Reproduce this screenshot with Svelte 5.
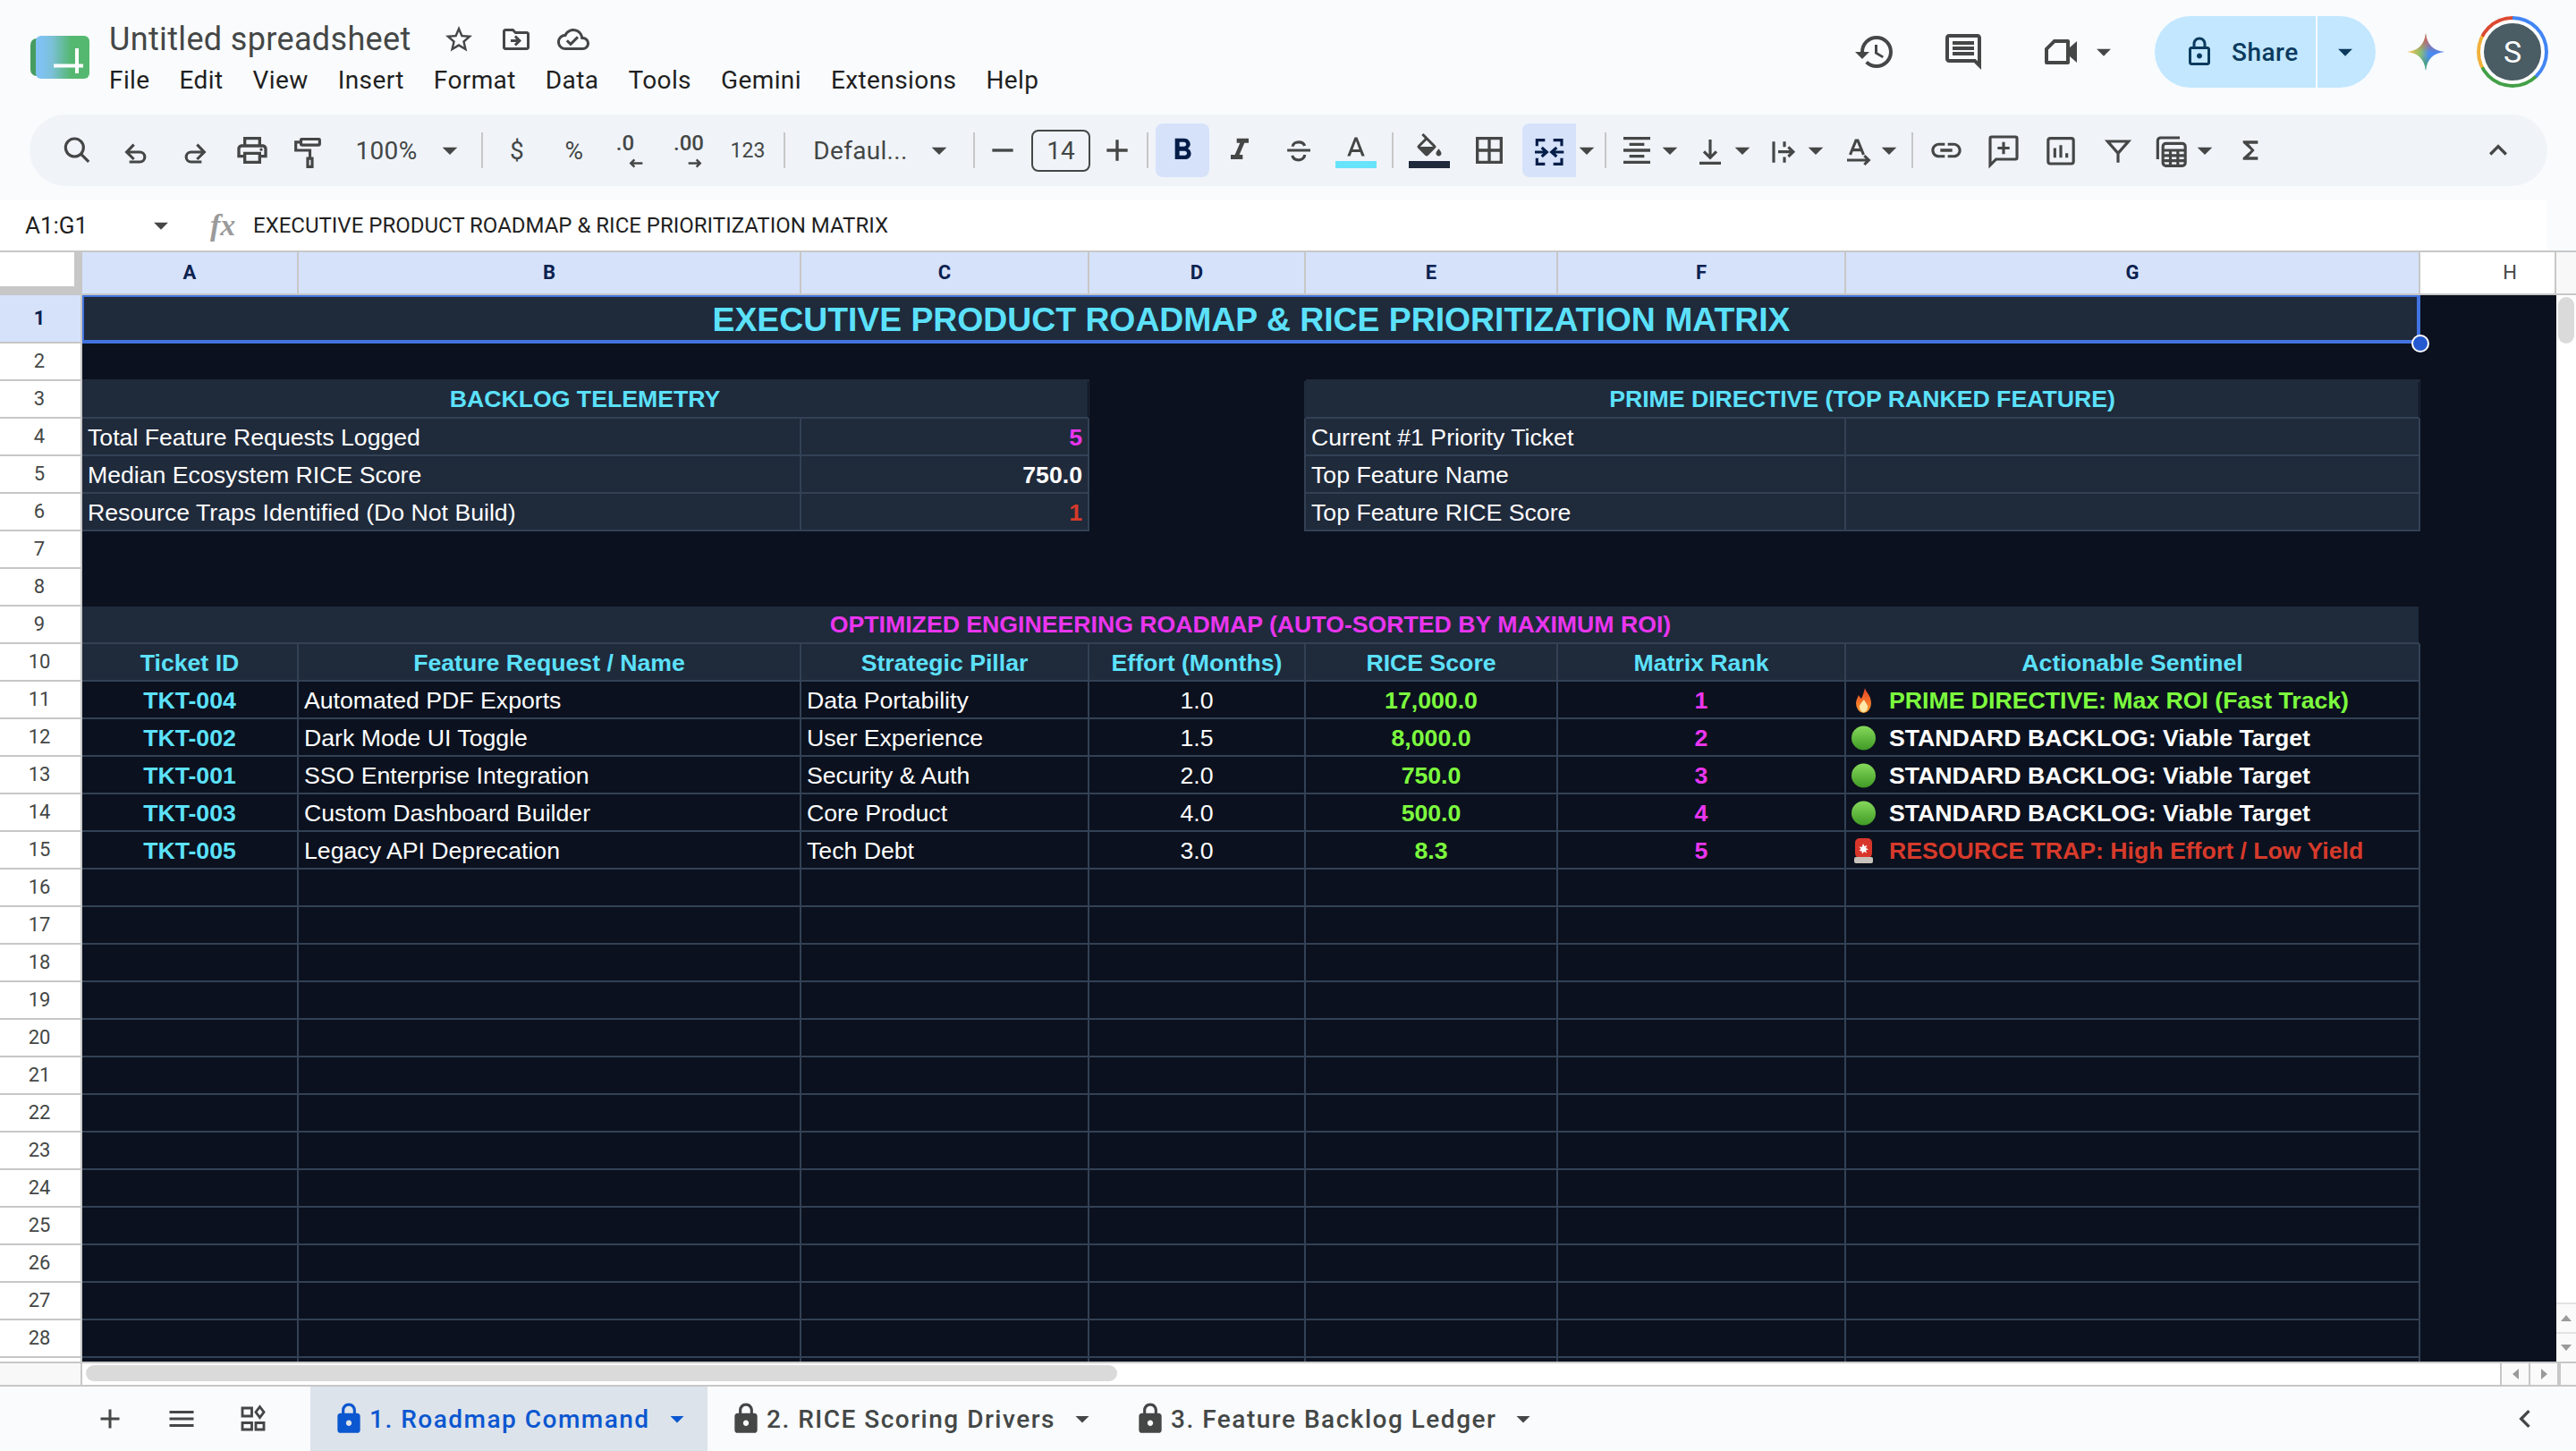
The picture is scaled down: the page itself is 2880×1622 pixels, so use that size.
<script>
  const P = {
    print: 'M19 8h-1V3H6v5H5c-1.66 0-3 1.34-3 3v6h4v4h12v-4h4v-6c0-1.66-1.34-3-3-3zM8 5h8v3H8V5zm8 14H8v-4h8v4zm2-4v-2H6v2H4v-4c0-.55.45-1 1-1h14c.55 0 1 .45 1 1v4h-2z M18 10.500a1 1 0 1 1 0 2 1 1 0 0 1 0-2z',
    bold: 'M15.6 10.79c.97-.67 1.65-1.77 1.65-2.79 0-2.26-1.75-4-4-4H7v14h7.04c2.09 0 3.71-1.7 3.71-3.79 0-1.52-.86-2.82-2.15-3.42zM10 6.5h3c.83 0 1.5.67 1.5 1.5s-.67 1.5-1.5 1.5h-3v-3zm3.5 9H10v-3h3.5c.83 0 1.5.67 1.5 1.5s-.67 1.5-1.5 1.5z',
    italic: 'M10 4v3h2.21l-3.42 8H6v3h8v-3h-2.21l3.42-8H18V4z',
    colorA: 'M11 3L5.5 17h2.25l1.12-3h6.25l1.12 3h2.25L13 3h-2zm-1.38 9L12 5.67 14.38 12H9.62z',
    fill: 'M16.56 8.94L7.62 0 6.21 1.41l2.38 2.38-5.15 5.15c-.59.59-.59 1.54 0 2.12l5.5 5.5c.29.29.68.44 1.06.44s.77-.15 1.06-.44l5.5-5.5c.59-.58.59-1.53 0-2.12zM5.21 10L10 5.21 14.79 10H5.21zM19 11.5s-2 2.17-2 3.5c0 1.1.9 2 2 2s2-.9 2-2c0-1.33-2-3.5-2-3.5z',
    borders: 'M3 3v18h18V3H3zm8 16H5v-6h6v6zm0-8H5V5h6v6zm8 8h-6v-6h6v6zm0-8h-6V5h6v6z',
    halign: 'M7 15v2h10v-2H7zm-4 6h18v-2H3v2zm0-8h18v-2H3v2zm4-6v2h10V7H7zM3 3v2h18V3H3z',
    link: 'M3.9 12c0-1.71 1.39-3.1 3.1-3.1h4V7H7c-2.76 0-5 2.24-5 5s2.24 5 5 5h4v-1.9H7c-1.71 0-3.1-1.39-3.1-3.1zM8 13h8v-2H8v2zm9-6h-4v1.9h4c1.71 0 3.1 1.39 3.1 3.1s-1.39 3.1-3.1 3.1h-4V17h4c2.76 0 5-2.24 5-5s-2.24-5-5-5z',
    sigma: 'M17 5.500H7v1.500l5.500 5-5.500 5v1.500h10v-2.200h-6.200l4-4.300-4-4.300h6.200z',
    up: 'M7.41 15.41L12 10.83l4.59 4.58L18 14l-6-6-6 6z',
    caret: 'M7 10l5 5 5-5z',
    minus: 'M5 11h14v2H5z',
    plus: 'M19 13h-6v6h-2v-6H5v-2h6V5h2v6h6v2z',
    lock: 'M18 8h-1V6c0-2.76-2.24-5-5-5S7 3.24 7 6v2H6c-1.1 0-2 .9-2 2v10c0 1.1.9 2 2 2h12c1.1 0 2-.9 2-2V10c0-1.1-.9-2-2-2zM9 6c0-1.66 1.34-3 3-3s3 1.34 3 3v2H9V6zm3 11c-1.1 0-2-.9-2-2s.9-2 2-2 2 .9 2 2-.9 2-2 2z',
    lockO: 'M18 8h-1V6c0-2.76-2.24-5-5-5S7 3.24 7 6v2H6c-1.1 0-2 .9-2 2v10c0 1.1.9 2 2 2h12c1.1 0 2-.9 2-2V10c0-1.1-.9-2-2-2zM9 6c0-1.66 1.34-3 3-3s3 1.34 3 3v2H9V6zm9 14H6V10h12v10zm-6-3c1.1 0 2-.9 2-2s-.9-2-2-2-2 .9-2 2 .9 2 2 2z',
    history: 'M13 3a9 9 0 0 0-9 9H1l3.89 3.89.07.14L9 12H6c0-3.87 3.13-7 7-7s7 3.13 7 7-3.13 7-7 7c-1.93 0-3.68-.79-4.94-2.06l-1.42 1.42A8.954 8.954 0 0 0 13 21a9 9 0 0 0 0-18zm-1 5v5l4.28 2.54.72-1.21-3.5-2.08V8H12z',
    comments: 'M21.99 4c0-1.1-.89-2-1.99-2H4c-1.1 0-2 .9-2 2v12c0 1.1.9 2 2 2h14l4 4-.01-18zM20 4v13.17L18.83 16H4V4h16zM6 12h12v2H6zm0-3h12v2H6zm0-3h12v2H6z',
    video: 'M8 5h8a1 1 0 0 1 1 1v3.500l4-3.500v12l-4-3.500V18a1 1 0 0 1-1 1H4a1 1 0 0 1-1-1V10zm.8 2L5 10.800V17h10V7z',
    star: 'M22 9.24l-7.19-.62L12 2 9.19 8.63 2 9.24l5.46 4.73L5.82 21 12 17.27 18.18 21l-1.63-7.03L22 9.24zM12 15.4l-3.76 2.27 1-4.28-3.32-2.88 4.38-.38L12 6.1l1.71 4.04 4.38.38-3.32 2.88 1 4.28L12 15.4z',
    move: 'M20 6h-8l-2-2H4c-1.1 0-1.99.9-1.99 2L2 18c0 1.1.9 2 2 2h16c1.1 0 2-.9 2-2V8c0-1.1-.9-2-2-2zm0 12H4V6h5.17l2 2H20v10zm-8.01-9l-1.41 1.41L12.16 12H8v2h4.16l-1.59 1.59L11.99 17 16 13.01 11.99 9z',
    cloud: 'M19.35 10.04C18.67 6.59 15.64 4 12 4 9.11 4 6.6 5.64 5.35 8.04 2.34 8.36 0 10.91 0 14c0 3.31 2.69 6 6 6h13c2.76 0 5-2.24 5-5 0-2.64-2.05-4.78-4.65-4.96zM19 18H6c-2.21 0-4-1.79-4-4 0-2.05 1.53-3.76 3.56-3.97l1.07-.11.5-.95C8.08 7.14 9.94 6 12 6c2.62 0 4.88 1.86 5.39 4.43l.3 1.5 1.53.11c1.56.1 2.78 1.41 2.78 2.96 0 1.65-1.35 3-3 3zm-9-3.82l-2.09-2.09L6.5 13.5 10 17l6.01-6.01-1.41-1.41z',
    menu: 'M3 18h18v-2H3zm0-5h18v-2H3zm0-7v2h18V6z',
    left: 'M15.41 7.41L14 6l-6 6 6 6 1.41-1.41L10.83 12z'
  };
  const S = {
    search: 'M17 10.200a6 6 0 1 1-12 0a6 6 0 1 1 12 0zM15.300 14.500L20.500 19.700',
    undo: 'M10 8.200L5.200 13.200L10 18M5.200 13.200H14a3.300 3.300 0 0 1 0 6.600H7',
    redo: 'M14 8.200L18.800 13.200L14 18M18.800 13.200H10a3.300 3.300 0 0 0 0 6.600H17',
    paint: 'M8 4.500h11.500a.5.5 0 0 1 .5.5v3a.5.5 0 0 1-.5.5H8a.5.5 0 0 1-.5-.5V5a.5.5 0 0 1 .5-.5zM7.500 6.500H4v5.500h9.500v5M12 17.500h3v5.500h-3z',
    strike: 'M8 9.500c0-1.900 2-3 4-3s3.500 1 4 2.500M4.300 12h15.500M16 15c0 2-1.800 3.500-4 3.500s-3.800-1-4.300-3',
    merge: 'M9.200 5.200H3.800V9.200M3.800 17.200V21.200H9.200M14.800 5.200H20.400V9.200M20.400 17.200V21.200H14.800M2.400 13.200H10M7 10.200l3.400 3-3.400 3M21.800 13.200H14M17 10.200l-3.400 3 3.400 3',
    valign: 'M12 4.800V17M7.800 12.800L12 17l4.200-4.200M4.800 20.600H19.200',
    wrap: 'M5.400 6.200v14M12.600 6.200v3.500M12.600 16.500v3.700M8.400 13H18.500M15.200 9.800L18.500 13l-3.300 3.200',
    rotate: 'M7.500 15L11.400 5.400h1.200L16.500 15M9 11.800h6M5.400 18.600H20M17 15.600l3 3-3 3',
    comment: 'M4 3h16a1 1 0 0 1 1 1v13a1 1 0 0 1-1 1H7l-4 4V4a1 1 0 0 1 1-1zM12 6.500v8M8 10.500h8',
    chart: 'M5 4h14a1.500 1.500 0 0 1 1.500 1.500v14a1.500 1.500 0 0 1-1.500 1.500H5a1.500 1.500 0 0 1-1.500-1.500v-14A1.500 1.500 0 0 1 5 4zM8 17v-6.500M12 17V8.500M16 17v-3',
    filter: 'M5 6h14l-7 8zM12 14v6.200',
    table: 'M16.800 3.600H4a2 2 0 0 0-2 2V18M7.500 7.400h11a2 2 0 0 1 2 2v11a2 2 0 0 1-2 2h-11a2 2 0 0 1-2-2v-11a2 2 0 0 1 2-2zM5.500 12h15M5.500 15.500h15M5.500 19h15M10.500 12v10.500M15.500 12v10.500',
    sheets: 'M4 4h7v6H4zM4 15h7v5H4zM14 15h6v5h-6zM17 3l3 4-3 4-3-4z'
  };

  const tools = [
    ['s', 85, 56, 'search'], ['s', 153, 56, 'undo'], ['s', 217, 56, 'redo'], ['i', 282, 56, 'print'], ['s', 344, 56, 'paint'],
    ['t', 432, 76, '100%'], ['c', 503, 24], ['sep', 539, 2],
    ['t', 578, 40, '$'], ['t', 642, 40, '%'], ['dec', 699, 44, '.0', 'l'], ['dec', 770, 56, '.00', 'r'], ['ts', 836, 48, '123'], ['sep', 877, 2],
    ['t', 962, 108, 'Defaul...'], ['c', 1050, 24], ['sep', 1089, 2],
    ['i', 1121, 40, 'minus'], ['box', 1186, 66, '14'], ['i', 1249, 40, 'plus'], ['sep', 1283, 2],
    ['on', 1322, 60, 'bold'], ['i', 1386, 44, 'italic'], ['s', 1452, 44, 'strike'], ['bar', 1516, 46, 'colorA', 'cyan'], ['sep', 1557, 2],
    ['bar', 1598, 46, 'fill', 'navy'], ['i', 1665, 44, 'borders'], ['son', 1732, 60, 'merge'], ['c', 1774, 24], ['sep', 1795, 2],
    ['i', 1830, 44, 'halign'], ['c', 1867, 24], ['s', 1912, 44, 'valign'], ['c', 1948, 24], ['s', 1994, 44, 'wrap'], ['c', 2030, 24], ['s', 2076, 44, 'rotate'], ['c', 2112, 24], ['sep', 2138, 2],
    ['i', 2176, 44, 'link'], ['s', 2240, 44, 'comment'], ['s', 2304, 44, 'chart'], ['s', 2368, 44, 'filter'], ['s', 2429, 44, 'table'], ['c', 2465, 24], ['i', 2516, 44, 'sigma'], ['i', 2793, 44, 'up']
  ];
  let edge = 33;
  const toolbar = tools.map(([kind, cx, w, a, b]) => {
    const gap = cx - w / 2 - edge;
    edge = cx + w / 2;
    return { kind, w, gap, a, b };
  });

  const menu = ['File', 'Edit', 'View', 'Insert', 'Format', 'Data', 'Tools', 'Gemini', 'Extensions', 'Help'];
  const letters = ['A', 'B', 'C', 'D', 'E', 'F', 'G'];
  const data = [
    ['TKT-004', 'Automated PDF Exports', 'Data Portability', '1.0', '17,000.0', '1', 'fire', 'PRIME DIRECTIVE: Max ROI (Fast Track)', 'lime'],
    ['TKT-002', 'Dark Mode UI Toggle', 'User Experience', '1.5', '8,000.0', '2', 'dot', 'STANDARD BACKLOG: Viable Target', 'white'],
    ['TKT-001', 'SSO Enterprise Integration', 'Security & Auth', '2.0', '750.0', '3', 'dot', 'STANDARD BACKLOG: Viable Target', 'white'],
    ['TKT-003', 'Custom Dashboard Builder', 'Core Product', '4.0', '500.0', '4', 'dot', 'STANDARD BACKLOG: Viable Target', 'white'],
    ['TKT-005', 'Legacy API Deprecation', 'Tech Debt', '3.0', '8.3', '5', 'siren', 'RESOURCE TRAP: High Effort / Low Yield', 'red']
  ];
  const heads = ['Ticket ID', 'Feature Request / Name', 'Strategic Pillar', 'Effort (Months)', 'RICE Score', 'Matrix Rank', 'Actionable Sentinel'];
  const leftP = [['Total Feature Requests Logged', '5', 'mag'], ['Median Ecosystem RICE Score', '750.0', 'white'], ['Resource Traps Identified (Do Not Build)', '1', 'red']];
  const rightP = ['Current #1 Priority Ticket', 'Top Feature Name', 'Top Feature RICE Score'];
  const emptyRows = Array.from({ length: 14 }, (_, i) => i + 16);
  const tabs = [['1. Roadmap Command', true], ['2. RICE Scoring Drivers', false], ['3. Feature Backlog Ledger', false]];
</script>

{#snippet ic(name, size = 40, cls = '')}
  <svg class={cls} width={size} height={size} viewBox="0 0 24 24"><path d={P[name]} fill="currentColor" /></svg>
{/snippet}
{#snippet st(name, size = 40)}
  <svg width={size} height={size} viewBox="0 0 24 24"><path d={S[name]} fill="none" stroke="currentColor" stroke-width="1.900" /></svg>
{/snippet}
{#snippet rh(n, label = n)}
  <div class="rh" class:rh-on={n === 1}>{label}</div>
{/snippet}

<div class="app">
  <header class="top">
    <svg class="logo" width="66" height="48" viewBox="0 0 66 48">
      <defs><linearGradient id="lg" x1="0" x2="1" y1="0" y2="0"><stop offset="0.1" stop-color="#7fc2f2" /><stop offset="0.3" stop-color="#7cc0d8" /><stop offset="0.65" stop-color="#55b872" /><stop offset="1" stop-color="#55b870" /></linearGradient></defs>
      <rect x="0" y="3" width="24" height="42" rx="7" fill="#479c62" />
      <rect x="6" y="0" width="60" height="48" rx="6" fill="url(#lg)" />
      <path d="M26 33.500h33M52 14v28" stroke="#fff" stroke-width="4" fill="none" />
    </svg>
    <div class="doc">
      <div class="doc-title">
        <span class="name">Untitled spreadsheet</span>
        <span class="doc-icons">
          {@render ic('star', 36)}
          {@render ic('move', 36)}
          {@render ic('cloud', 36)}
        </span>
      </div>
      <nav class="menu">
        {#each menu as m}<span>{m}</span>{/each}
      </nav>
    </div>
    <div class="actions">
      {@render ic('history', 48)}
      <span class="g51">{@render ic('comments', 48)}</span>
      <span class="vid">{@render ic('video', 48)}{@render ic('caret', 38, 'car')}</span>
      <div class="share">
        <div class="share-main">{@render ic('lockO', 36)}<span>Share</span></div>
        <div class="share-drop">{@render ic('caret', 38)}</div>
      </div>
      <svg class="gem" width="42" height="42" viewBox="0 0 24 24">
        <defs>
          <linearGradient id="gm" x1="0" x2="1" y1="0.35" y2="0.5"><stop offset="0.08" stop-color="#f1c04a" /><stop offset="0.38" stop-color="#8cbf72" /><stop offset="0.6" stop-color="#4a8cf0" /><stop offset="1" stop-color="#4285f4" /></linearGradient>
          <linearGradient id="gr" x1="0.45" x2="0.4" y1="0" y2="0.5"><stop offset="0.1" stop-color="#d9534f" /><stop offset="1" stop-color="#d9534f" stop-opacity="0" /></linearGradient>
          <linearGradient id="gg" x1="0.5" x2="0.5" y1="1" y2="0.6"><stop offset="0.1" stop-color="#3fa653" /><stop offset="1" stop-color="#3fa653" stop-opacity="0" /></linearGradient>
        </defs>
        <path d="M12 0C12.500 7 17 11.500 24 12C17 12.500 12.500 17 12 24C11.500 17 7 12.500 0 12C7 11.500 11.500 7 12 0Z" fill="url(#gm)" />
        <path d="M12 0C12.500 7 17 11.500 24 12C17 12.500 12.500 17 12 24C11.500 17 7 12.500 0 12C7 11.500 11.500 7 12 0Z" fill="url(#gr)" />
        <path d="M12 0C12.500 7 17 11.500 24 12C17 12.500 12.500 17 12 24C11.500 17 7 12.500 0 12C7 11.500 11.500 7 12 0Z" fill="url(#gg)" />
      </svg>
      <div class="ava"><div class="ava-in">S</div></div>
    </div>
  </header>

  <div class="toolbar">
    {#each toolbar as t}
      <div class="tb" class:on={t.kind === 'on'} class:son={t.kind === 'son'} class:sep={t.kind === 'sep'} style="width:{t.w}px;margin-left:{t.gap}px">
        {#if t.kind === 'i' || t.kind === 'on'}{@render ic(t.a)}
        {:else if t.kind === 's' || t.kind === 'son'}{@render st(t.a)}
        {:else if t.kind === 't'}<span class="tt">{t.a}</span>
        {:else if t.kind === 'ts'}<span class="tt small">{t.a}</span>
        {:else if t.kind === 'c'}{@render ic('caret', 40)}
        {:else if t.kind === 'box'}<span class="fs">{t.a}</span>
        {:else if t.kind === 'dec'}
          <span class="dec"><span>{t.a}</span>
            <svg class={t.b === 'l' ? 'dl' : 'dr'} width="18" height="13" viewBox="0 0 22 14"><path d={t.b === 'l' ? 'M20 7H4M9 2L4 7l5 5' : 'M2 7h16M13 2l5 5-5 5'} fill="none" stroke="currentColor" stroke-width="3" /></svg>
          </span>
        {:else if t.kind === 'bar'}
          <span class="barred">{@render ic(t.a, 36)}<i class={t.b}></i></span>
        {/if}
      </div>
    {/each}
  </div>

  <div class="fbar">
    <div class="nbox"><span>A1:G1</span>{@render ic('caret', 38)}</div>
    <span class="fx">fx</span>
    <span class="ftext">EXECUTIVE PRODUCT ROADMAP &amp; RICE PRIORITIZATION MATRIX</span>
  </div>

  <div class="sheetwrap">
    <div class="sheet">
      <div class="corner"></div>
      {#each letters as l}<div class="ch ch-on">{l}</div>{/each}
      <div class="ch ch-h">H</div>

      {@render rh(1)}
      <div class="c s7 band title">
        <span>EXECUTIVE PRODUCT ROADMAP &amp; RICE PRIORITIZATION MATRIX</span>
        <div class="sel"><i class="handle"></i></div>
      </div>
      <div class="c blank"></div>

      {@render rh(2)}
      <div class="c s8 blank"></div>

      {@render rh(3)}
      <div class="c s3 band merged ext center bold cyan">BACKLOG TELEMETRY</div>
      <div class="c blank"></div>
      <div class="c s3 band merged ext extl center bold cyan">PRIME DIRECTIVE (TOP RANKED FEATURE)</div>
      <div class="c blank"></div>

      {#each leftP as row, i}
        {@render rh(4 + i)}
        <div class="c s2 band white">{row[0]}</div>
        <div class="c band bold right {row[2]}">{row[1]}</div>
        <div class="c blank"></div>
        <div class="c s2 band edge white">{rightP[i]}</div>
        <div class="c band"></div>
        <div class="c blank"></div>
      {/each}

      {@render rh(7)}
      <div class="c s8 blank"></div>
      {@render rh(8)}
      <div class="c s8 blank"></div>

      {@render rh(9)}
      <div class="c s7 band merged center bold mag">OPTIMIZED ENGINEERING ROADMAP (AUTO-SORTED BY MAXIMUM ROI)</div>
      <div class="c blank"></div>

      {@render rh(10)}
      {#each heads as h}<div class="c band center bold cyan">{h}</div>{/each}
      <div class="c blank"></div>

      {#each data as r, i}
        {@render rh(11 + i)}
        <div class="c center bold cyan">{r[0]}</div>
        <div class="c white">{r[1]}</div>
        <div class="c white">{r[2]}</div>
        <div class="c center white">{r[3]}</div>
        <div class="c center bold lime">{r[4]}</div>
        <div class="c center bold mag">{r[5]}</div>
        <div class="c bold sent {r[8]}">
          {#if r[6] === 'fire'}
            <svg width="27" height="28" viewBox="0 0 27 28">
              <defs><linearGradient id="fi" x1="0" x2="0" y1="0" y2="1"><stop offset="0" stop-color="#e8452a" /><stop offset="0.6" stop-color="#f3762a" /><stop offset="1" stop-color="#f9a63a" /></linearGradient></defs>
              <path d="M15 0c1 5 7 8 7 17a8.500 11 0 0 1-17 0c0-4 2-6 3-9 1 2 2 3 3 4 2-4 3-8 4-12z" fill="url(#fi)" />
              <path d="M14 13c1 3 4 5 4 8a4.500 6 0 0 1-9 0c0-3 3-5 5-8z" fill="#fde9a8" />
            </svg>
          {:else if r[6] === 'dot'}
            <svg width="27" height="28" viewBox="0 0 27 28">
              <defs><linearGradient id="do{i}" x1="0" x2="0" y1="0" y2="1"><stop offset="0" stop-color="#86d95c" /><stop offset="1" stop-color="#3f9a24" /></linearGradient></defs>
              <circle cx="13.500" cy="14" r="13.500" fill="url(#do{i})" />
            </svg>
          {:else}
            <svg width="27" height="28" viewBox="0 0 27 28">
              <rect x="4" y="0" width="19" height="22" rx="5" fill="#d9362b" />
              <rect x="3" y="21" width="21" height="7" rx="2" fill="#c9c3bd" />
              <path d="M13 6l1.500 3 3-1-1.500 3 3 1.500-3 1 1 3-3-1.500-2 2.500-.5-3-3-.5 2-2-2-2.500 3 .5z" fill="#fff" />
            </svg>
          {/if}
          <span>{r[7]}</span>
        </div>
        <div class="c blank"></div>
      {/each}

      {#each emptyRows as n}
        {@render rh(n, n < 29 ? n : '')}
        {#each letters as l}<div class="c"></div>{/each}
        <div class="c blank"></div>
      {/each}
    </div>
    <aside class="vsb">
      <div class="vsb-top"></div>
      <div class="vsb-track"><div class="vsb-thumb"></div></div>
      <div class="vsb-btn"><i class="tri up"></i></div>
      <div class="vsb-btn"><i class="tri down"></i></div>
    </aside>
  </div>

  <div class="hsb">
    <div class="hsb-left"></div>
    <div class="hsb-track"><div class="hsb-thumb"></div></div>
    <div class="hsb-btn"><i class="tri lf"></i></div>
    <div class="hsb-btn"><i class="tri rt"></i></div>
    <div class="hsb-end"></div>
  </div>

  <footer class="tabs">
    <div class="tabtools">
      {@render ic('plus', 36)}
      {@render ic('menu', 36)}
      {@render st('sheets', 36)}
    </div>
    {#each tabs as t}
      <div class="tab" class:active={t[1]}>
        {@render ic('lock', 38)}
        <span>{t[0]}</span>
        {@render ic('caret', 36)}
      </div>
    {/each}
    <div class="tabend">{@render ic('left', 40)}</div>
  </footer>
</div>

<style>
  :global(body) { margin: 0; background: #f9fbfd; }
  .app { width: 2880px; height: 1622px; display: flex; flex-direction: column; overflow: hidden; background: #f9fbfd; font-family: Roboto, "Noto Sans", sans-serif; color: #444746; }
  svg { display: block; flex: none; overflow: visible; }

  .top { height: 128px; flex: none; display: flex; align-items: flex-start; padding-left: 34px; padding-right: 31px; box-sizing: border-box; }
  .logo { margin-top: 40px; }
  .doc { margin-left: 22px; padding-top: 22px; }
  .doc-title { display: flex; align-items: center; height: 44px; }
  .name { font-size: 36px; line-height: 44px; color: #444746; width: 335px; white-space: nowrap; letter-spacing: 0.35px; }
  .doc-icons { display: flex; gap: 28px; margin-left: 38px; }
  .menu { display: flex; gap: 33px; margin-top: 6px; font-size: 28px; line-height: 36px; color: #1f1f1f; letter-spacing: 0.4px; }
  .actions { margin-left: auto; display: flex; align-items: center; height: 80px; margin-top: 18px; }
  .g51 { margin-left: 51px; display: flex; align-items: center; }
  .vid { margin-left: 61px; display: flex; align-items: center; }
  .actions :global(.car) { margin-left: 5px; }
  .share { margin-left: 38px; width: 247px; height: 80px; display: flex; border-radius: 40px; overflow: hidden; color: #0b3a5e; }
  .share-main { width: 180px; background: #c2e7ff; display: flex; align-items: center; padding-left: 32px; box-sizing: border-box; gap: 18px; font-size: 28px; font-weight: 500; letter-spacing: 0.5px; }
  .share-drop { flex: 1; margin-left: 2px; background: #c2e7ff; display: flex; align-items: center; justify-content: center; padding-right: 4px; }
  .gem { margin-left: 35px; }
  .ava { margin-left: 36px; width: 80px; height: 80px; border-radius: 50%; background: conic-gradient(#4285f4 44deg, #4285f4 137deg, #43a047 137deg, #43a047 243deg, #f0b03a 243deg, #f0b03a 297deg, #db4a32 297deg, #db4a32 404deg); display: flex; align-items: center; justify-content: center; }
  .ava-in { width: 72px; height: 72px; box-sizing: border-box; border-radius: 50%; background: #4a5c64; border: 4px solid #fff; color: #fff; font-size: 34px; display: flex; align-items: center; justify-content: center; }

  .toolbar { margin-left: 33px; width: 2815px; height: 80px; flex: none; border-radius: 40px; background: #f0f4f9; display: flex; align-items: center; }
  .tb { flex: none; height: 60px; display: flex; align-items: center; justify-content: center; white-space: nowrap; }
  .tb.on { background: #d6e2fa; border-radius: 8px; color: #041e49; }
  .tb.son { background: #d6e2fa; border-radius: 8px 0 0 8px; color: #041e49; }
  .tb.sep { height: 40px; background: #c7c7c7; }
  .tt { font-size: 28px; color: #444746; letter-spacing: 0.3px; }
  .tt.small { font-size: 23px; letter-spacing: 0; }
  .fs { width: 66px; height: 47px; box-sizing: border-box; border: 2px solid #444746; border-radius: 8px; display: flex; align-items: center; justify-content: center; font-size: 28px; color: #444746; }
  .dec { display: flex; flex-direction: column; align-items: center; font-size: 24px; line-height: 24px; font-weight: 500; }
  .dec svg { margin-top: 4px; }
  .dec .dl { margin-left: 24px; }
  .dec .dr { margin-left: 14px; }
  .barred { display: flex; flex-direction: column; align-items: center; height: 40px; justify-content: flex-end; }
  .barred :global(svg) { margin-bottom: -5px; }
  .barred i { display: block; width: 46px; height: 8px; }
  .barred i.cyan { background: #67e3fb; }
  .barred i.navy { background: #1f2a3b; }

  .fbar { margin-top: 16px; width: 2848px; height: 56px; flex: none; background: #fff; display: flex; align-items: center; font-size: 26px; color: #1f1f1f; }
  .nbox { width: 199px; padding-left: 28px; box-sizing: border-box; display: flex; align-items: center; justify-content: space-between; font-family: Roboto, sans-serif; }
  .nbox :global(svg) { color: #444746; }
  .fx { margin-left: 36px; width: 48px; font-family: "Liberation Serif", serif; font-style: italic; font-weight: 700; font-size: 34px; color: #9a9a9a; }
  .ftext { font-family: Roboto, sans-serif; font-size: 24px; }

  .sheetwrap { flex: none; height: 1242px; border-top: 2px solid #c7c7c7; display: flex; box-sizing: border-box; background: #fff; }
  .sheet { width: 2858px; flex: none; overflow: hidden; display: grid; grid-template-columns: 92px 242px 562px 322px 242px 282px 322px 642px 152px; grid-template-rows: 48px 54px; grid-auto-rows: 42px; background: #0b111e; font-family: "Liberation Sans", Arial, sans-serif; font-size: 26.67px; color: #fff; }
  .corner { background: #fff; border-right: 9px solid #c7c7c7; border-bottom: 10px solid #c7c7c7; }
  .ch { background: #fff; color: #444746; border-right: 2px solid #c7c7c7; border-bottom: 2px solid #c7c7c7; display: flex; align-items: center; justify-content: center; font-family: Roboto, sans-serif; font-size: 22px; padding-bottom: 2px; }
  .ch-h { padding-left: 50px; }
  .ch-on { background: #d6e2fa; color: #0b2150; font-weight: 700; }
  .rh { background: #fff; color: #444746; border-right: 2px solid #c7c7c7; border-bottom: 2px solid #c7c7c7; display: flex; align-items: center; justify-content: center; font-family: Roboto, sans-serif; font-size: 22px; padding-right: 2px; padding-bottom: 2px; }
  .rh-on { background: #d6e2fa; color: #0b2150; font-weight: 700; }

  .c { border-right: 2px solid #334155; border-bottom: 2px solid #334155; padding: 2px 6px 0; display: flex; align-items: center; white-space: nowrap; overflow: hidden; min-width: 0; background: #0b111e; }
  .blank { border-color: transparent; }
  .band { background: #1f2a3b; }
  .merged { border-right-color: transparent; background-clip: padding-box; padding-top: 0; }
  .ext { box-shadow: 0 -2px 0 #1f2a3b; overflow: visible; }
  .ext.extl { box-shadow: 0 -2px 0 #1f2a3b, -2px 0 0 #1f2a3b; }
  .edge { box-shadow: -2px 0 0 #334155; overflow: visible; }
  .s2 { grid-column: span 2; }
  .s3 { grid-column: span 3; }
  .s7 { grid-column: span 7; }
  .s8 { grid-column: span 8; }
  .center { justify-content: center; }
  .right { justify-content: flex-end; }
  .bold { font-weight: 700; }
  .cyan { color: #5ce1fb; }
  .mag { color: #e935ef; }
  .lime { color: #7cfc3e; }
  .red { color: #d63a2b; }
  .white { color: #fff; }
  .title { position: relative; overflow: visible; justify-content: center; font-size: 37.33px; font-weight: 700; color: #5ce1fb; border: 0; padding: 0; z-index: 2; }
  .sel { position: absolute; left: 0; top: 0; right: 0; bottom: 0; border: solid #4274e0; border-width: 2px 4px 4px 2px; }
  .handle { position: absolute; right: -14px; bottom: -14px; width: 16px; height: 16px; background: #2459cf; border: 2px solid #fff; border-radius: 50%; }
  .sent { gap: 15px; }

  .vsb { flex: 1; display: flex; flex-direction: column; background: #fff; }
  .vsb-top { height: 46px; background: #f8f8f8; border-bottom: 2px solid #c7c7c7; flex: none; }
  .vsb-track { flex: 1; padding: 2px; }
  .vsb-thumb { height: 52px; background: #dadada; border-radius: 9px; }
  .vsb-btn { height: 31px; border-top: 2px solid #e3e3e3; background: #fafafa; display: flex; align-items: center; justify-content: center; }
  .tri { display: block; width: 0; height: 0; border: 6px solid transparent; }
  .tri.up { border-top: 0; border-bottom: 7px solid #9a9a9a; }
  .tri.down { border-bottom: 0; border-top: 7px solid #9a9a9a; }
  .tri.lf { border-left: 0; border-right: 7px solid #9a9a9a; }
  .tri.rt { border-right: 0; border-left: 7px solid #9a9a9a; }

  .hsb { flex: none; height: 28px; box-sizing: border-box; border-top: 2px solid #c7c7c7; border-bottom: 2px solid #c7c7c7; display: flex; background: #fff; }
  .hsb-left { width: 90px; background: #f8f8f8; border-right: 2px solid #c7c7c7; flex: none; }
  .hsb-track { width: 2703px; flex: none; padding: 2px 4px; box-sizing: border-box; }
  .hsb-thumb { width: 1153px; height: 18px; background: #dadada; border-radius: 9px; }
  .hsb-btn { width: 30px; flex: none; border-left: 2px solid #c7c7c7; background: #fafafa; display: flex; align-items: center; justify-content: center; }
  .hsb-end { flex: 1; border-left: 4px solid #c7c7c7; background: #fafafa; }

  .tabs { flex: 1; display: flex; align-items: stretch; font-size: 28px; font-weight: 500; letter-spacing: 1.5px; background: #f9fbfd; }
  .tabtools { display: flex; align-items: center; gap: 44px; padding-left: 105px; width: 347px; box-sizing: border-box; flex: none; letter-spacing: 0; }
  .tab { display: flex; align-items: center; gap: 4px; padding: 0 15px 0 24px; white-space: nowrap; color: #444746; }
  .tab.active { background: #dde3ea; color: #0b57d0; width: 444px; box-sizing: border-box; }
  .tab :global(svg:last-child) { margin-left: 8px; }
  .tabend { margin-left: auto; margin-right: 37px; display: flex; align-items: center; }
</style>
